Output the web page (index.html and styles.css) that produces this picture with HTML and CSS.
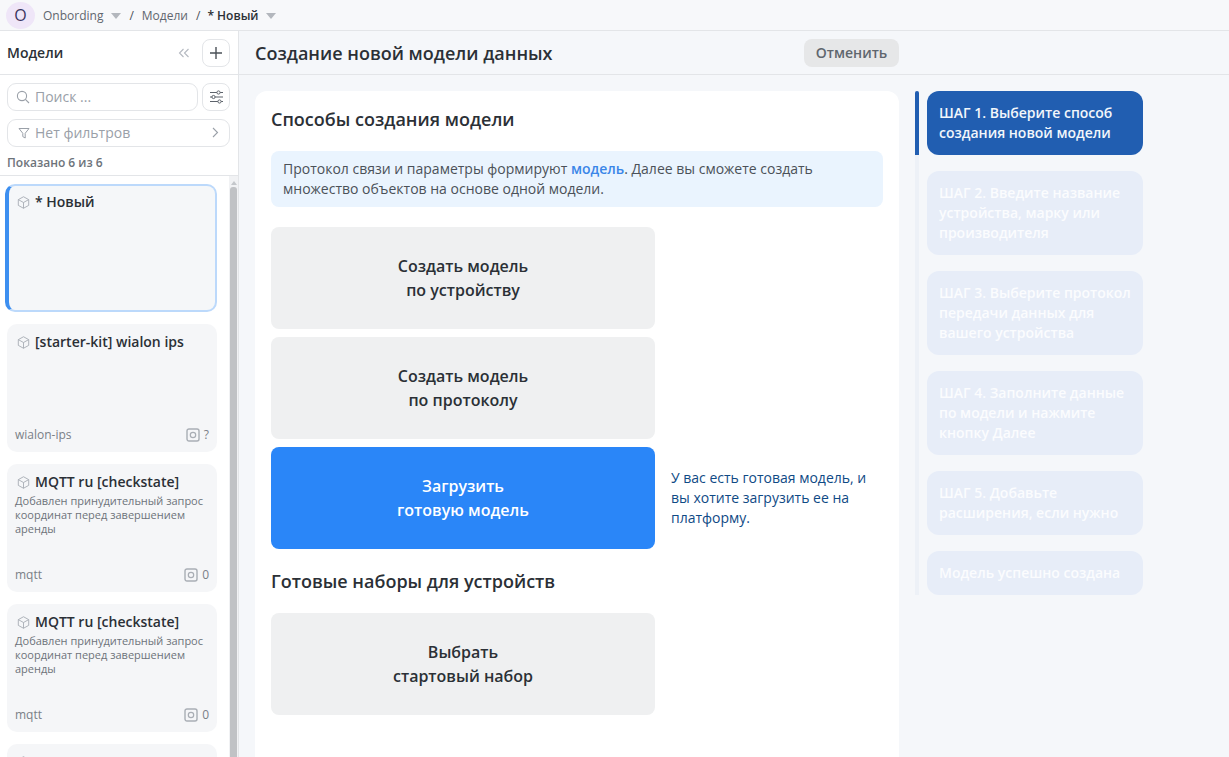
FILE: index.html
```html
<!DOCTYPE html>
<html lang="en">
<head>
    <meta charset="UTF-8">
    <title>Создание новой модели данных</title>
    <link rel="stylesheet" href="styles.css">
</head>
<body>
    <svg class="icon-defs" width="0" height="0">
        <symbol id="cube" viewBox="0 0 14 14">
            <path d="M7 .8l5.6 3.1v6.2L7 13.2l-5.6-3.1V3.9z M1.4 3.9L7 7l5.6-3.1 M7 7v6.2" fill="none" stroke="currentColor" stroke-width="1" stroke-linejoin="round"/>
        </symbol>
        <symbol id="obj" viewBox="0 0 14 14">
            <rect x="1" y="1" width="12" height="12" rx="2" fill="none" stroke="currentColor" stroke-width="1.4"/>
            <circle cx="7" cy="7" r="2.7" fill="none" stroke="currentColor" stroke-width="1.2"/>
        </symbol>
    </svg>

    <header class="topbar">
        <div class="avatar">O</div>
        <span class="crumb">Onbording</span>
        <span class="caret"></span>
        <span class="sep">/</span>
        <span class="crumb">Модели</span>
        <span class="sep">/</span>
        <span class="crumb crumb-current">* Новый</span>
        <span class="caret"></span>
    </header>

    <div class="layout">
        <aside class="sidebar">
            <div class="side-head">
                <h2>Модели</h2>
                <span class="collapse">
                    <svg width="12" height="10" viewBox="0 0 12 10"><path d="M5.5 1L1.5 5l4 4M10.5 1l-4 4 4 4" fill="none" stroke="#b4b9c0" stroke-width="1.1"/></svg>
                </span>
                <button class="square-btn">
                    <svg width="14" height="14" viewBox="0 0 14 14"><path d="M7 1v12M1 7h12" fill="none" stroke="#4b5158" stroke-width="1.4"/></svg>
                </button>
            </div>
            <div class="side-tools">
                <div class="search-row">
                    <div class="field search">
                        <svg width="14" height="14" viewBox="0 0 14 14"><circle cx="6" cy="6" r="4.6" fill="none" stroke="#9aa0a8" stroke-width="1.1"/><path d="M9.4 9.4L13 13" stroke="#9aa0a8" stroke-width="1.1"/></svg>
                        <span>Поиск ...</span>
                    </div>
                    <button class="square-btn small">
                        <svg width="15" height="14" viewBox="0 0 15 14"><path d="M1 2.5h13M1 7h13M1 11.5h13" stroke="#5d636b" stroke-width="1.1"/><circle cx="9.5" cy="2.5" r="1.6" fill="#fff" stroke="#5d636b"/><circle cx="4.5" cy="7" r="1.6" fill="#fff" stroke="#5d636b"/><circle cx="10.5" cy="11.5" r="1.6" fill="#fff" stroke="#5d636b"/></svg>
                    </button>
                </div>
                <div class="field filter">
                    <svg width="12" height="12" viewBox="0 0 12 12"><path d="M1 1.5h10L7.2 6.3V11L4.8 9.6V6.3z" fill="none" stroke="#9aa0a8" stroke-width="1"/></svg>
                    <span>Нет фильтров</span>
                    <svg class="chev" width="7" height="11" viewBox="0 0 7 11"><path d="M1 1l4.5 4.5L1 10" fill="none" stroke="#9aa0a8" stroke-width="1.1"/></svg>
                </div>
                <div class="shown">Показано 6 из 6</div>
            </div>
            <div class="list-wrap">
                <div class="model-list">
                    <div class="model-card active">
                        <div class="model-title"><svg class="cube"><use href="#cube"/></svg>* Новый</div>
                    </div>
                    <div class="model-card">
                        <div class="model-title"><svg class="cube"><use href="#cube"/></svg>[starter-kit] wialon ips</div>
                        <div class="model-foot"><span>wialon-ips</span><span class="count"><svg class="obj"><use href="#obj"/></svg>?</span></div>
                    </div>
                    <div class="model-card">
                        <div class="model-title"><svg class="cube"><use href="#cube"/></svg>MQTT ru [checkstate]</div>
                        <p class="model-desc">Добавлен принудительный запрос координат перед завершением аренды</p>
                        <div class="model-foot"><span>mqtt</span><span class="count"><svg class="obj"><use href="#obj"/></svg>0</span></div>
                    </div>
                    <div class="model-card">
                        <div class="model-title"><svg class="cube"><use href="#cube"/></svg>MQTT ru [checkstate]</div>
                        <p class="model-desc">Добавлен принудительный запрос координат перед завершением аренды</p>
                        <div class="model-foot"><span>mqtt</span><span class="count"><svg class="obj"><use href="#obj"/></svg>0</span></div>
                    </div>
                    <div class="model-card">
                        <div class="model-title"><svg class="cube"><use href="#cube"/></svg></div>
                    </div>
                </div>
                <div class="scrollbar">
                    <span class="scroll-arrow"></span>
                    <div class="scroll-thumb"></div>
                </div>
            </div>
        </aside>

        <main class="content">
            <div class="content-head">
                <h1>Создание новой модели данных</h1>
                <button class="cancel">Отменить</button>
            </div>
            <div class="content-body">
                <section class="panel">
                    <h3>Способы создания модели</h3>
                    <div class="notice">Протокол связи и параметры формируют <a href="#">модель</a>. Далее вы сможете создать множество объектов на основе одной модели.</div>
                    <div class="choices">
                        <div class="choice-row"><button class="choice">Создать модель<br>по устройству</button></div>
                        <div class="choice-row"><button class="choice">Создать модель<br>по протоколу</button></div>
                        <div class="choice-row">
                            <button class="choice selected">Загрузить<br>готовую модель</button>
                            <p class="choice-hint">У вас есть готовая модель, и вы хотите загрузить ее на платформу.</p>
                        </div>
                    </div>
                    <h3 class="kits-title">Готовые наборы для устройств</h3>
                    <div class="choice-row"><button class="choice">Выбрать<br>стартовый набор</button></div>
                </section>

                <nav class="steps">
                    <div class="step current">ШАГ 1. Выберите способ создания новой модели</div>
                    <div class="step">ШАГ 2. Введите название устройства, марку или производителя</div>
                    <div class="step">ШАГ 3. Выберите протокол передачи данных для вашего устройства</div>
                    <div class="step">ШАГ 4. Заполните данные по модели и нажмите кнопку Далее</div>
                    <div class="step">ШАГ 5. Добавьте расширения, если нужно</div>
                    <div class="step">Модель успешно создана</div>
                </nav>
            </div>
        </main>
    </div>
</body>
</html>
```

FILE: styles.css
```css
* {
    margin: 0;
    padding: 0;
    box-sizing: border-box;
}

html, body {
    height: 100%;
    overflow: hidden;
}

body {
    font-family: "Open Sans", "Noto Sans", sans-serif;
    background: #f5f7fa;
    color: #2b3036;
}

button {
    font-family: inherit;
    border: none;
    cursor: pointer;
}

.icon-defs {
    position: absolute;
}

.topbar {
    height: 31px;
    display: flex;
    align-items: center;
    padding-left: 6px;
    font-size: 12px;
    color: #5f666e;
    background: #f7f8fa;
    border-bottom: 1px solid #e3e5e8;
}

.avatar {
    width: 29px;
    height: 27px;
    border-radius: 50%;
    background: #efe6f8;
    color: #3b3560;
    font-size: 16px;
    text-align: center;
    line-height: 27px;
    margin-right: 8px;
}

.crumb-current {
    color: #2b3036;
    font-weight: 600;
}

.caret {
    width: 0;
    height: 0;
    margin: 1px 0 0 8px;
    border-left: 5px solid transparent;
    border-right: 5px solid transparent;
    border-top: 6px solid #b3b7bd;
}

.sep {
    margin: 0 7px 0 8px;
    color: #4b5158;
}

.caret + .sep {
    margin: 0 8px;
}

.layout {
    display: flex;
    height: 726px;
}

.sidebar {
    width: 239px;
    flex-shrink: 0;
    display: flex;
    flex-direction: column;
    background: #fff;
    border-right: 1px solid #e3e5e8;
}

.side-head {
    height: 44px;
    display: flex;
    align-items: center;
    padding: 0 8px 0 7px;
    border-bottom: 1px solid #e3e5e8;
}

.side-head h2 {
    font-size: 14px;
    font-weight: 600;
    flex: 1;
}

.collapse {
    display: flex;
    margin-right: 12px;
}

.square-btn {
    width: 28px;
    height: 28px;
    background: #fff;
    border: 1px solid #e3e5e8;
    border-radius: 8px;
    display: flex;
    align-items: center;
    justify-content: center;
}

.side-tools {
    padding: 8px 8px 0 7px;
    border-bottom: 1px solid #e3e5e8;
    height: 101px;
}

.search-row {
    display: flex;
    gap: 4px;
    margin-bottom: 8px;
}

.field {
    height: 28px;
    border: 1px solid #e3e5e8;
    border-radius: 9px;
    display: flex;
    align-items: center;
    gap: 5px;
    padding: 0 0 1px 8px;
    font-size: 14px;
    color: #9aa0a8;
}

.search {
    flex: 1;
}

.filter {
    padding-left: 10px;
    padding-right: 10px;
    gap: 5px;
}

.chev {
    margin-left: auto;
}

.shown {
    margin-top: 7px;
    font-size: 12px;
    font-weight: 600;
    color: #6d737a;
}

.list-wrap {
    flex: 1;
    display: flex;
    overflow: hidden;
}

.model-list {
    width: 229px;
    padding: 8px 12px 0 7px;
    display: flex;
    flex-direction: column;
    gap: 12px;
    flex-shrink: 0;
}

.model-card {
    height: 128px;
    flex-shrink: 0;
    background: #f5f6f8;
    border-radius: 10px;
    padding: 8px 8px 0 8px;
    display: flex;
    flex-direction: column;
}

.model-card.active {
    margin-left: -2px;
    background: #f5f7f9;
    border: 2px solid #bcd9fb;
    border-left: 4px solid #3d8ff0;
    padding: 6px 8px 0 6px;
}

.model-title {
    font-size: 14px;
    font-weight: 600;
    line-height: 20px;
    min-height: 20px;
    display: flex;
    align-items: center;
    color: #2b3036;
}

.cube {
    width: 13px;
    height: 13px;
    color: #a9aeb5;
    margin: 0 5px 0 2px;
    flex-shrink: 0;
}

.model-desc {
    font-size: 11px;
    line-height: 14px;
    color: #6d737a;
    margin-top: 2px;
}

.model-foot {
    margin-top: auto;
    margin-bottom: 9px;
    display: flex;
    justify-content: space-between;
    align-items: center;
    font-size: 12px;
    color: #7a8087;
}

.count {
    display: flex;
    align-items: center;
    gap: 4px;
}

.obj {
    width: 14px;
    height: 14px;
    color: #a9aeb5;
}

.scrollbar {
    width: 9px;
    background: #f1f2f4;
    display: flex;
    flex-direction: column;
    align-items: center;
    padding-top: 5px;
}

.scroll-arrow {
    width: 0;
    height: 0;
    border-left: 3px solid transparent;
    border-right: 3px solid transparent;
    border-bottom: 4px solid #c4c7cb;
    margin-bottom: 2px;
}

.scroll-thumb {
    width: 7px;
    flex: 1;
    background: #c0c2c5;
    border-radius: 3px 3px 0 0;
}

.content {
    flex: 1;
    display: flex;
    flex-direction: column;
    min-width: 0;
}

.content-head {
    height: 44px;
    display: flex;
    align-items: center;
    padding-left: 16px;
    border-bottom: 1px solid #e3e5e8;
}

.content-head h1 {
    font-size: 18px;
    font-weight: 600;
    line-height: 24px;
    width: 549px;
}

.cancel {
    width: 95px;
    height: 28px;
    border-radius: 8px;
    background: #e6e7e8;
    color: #5f666e;
    font-size: 14px;
    font-weight: 600;
}

.content-body {
    flex: 1;
    display: flex;
    padding: 16px 0 0 16px;
    gap: 16px;
    overflow: hidden;
}

.panel {
    width: 644px;
    background: #fff;
    border-radius: 12px 12px 0 0;
    padding: 16px;
}

.panel h3 {
    font-size: 18px;
    font-weight: 600;
    line-height: 24px;
}

.notice {
    margin-top: 20px;
    padding: 8px 12px;
    background: #eaf4fe;
    border-radius: 8px;
    font-size: 14px;
    line-height: 20px;
    color: #4b5158;
}

.notice a {
    color: #3a86e8;
    font-weight: 600;
    text-decoration: none;
}

.choices {
    margin-top: 20px;
    display: flex;
    flex-direction: column;
    gap: 8px;
}

.choice-row {
    display: flex;
    align-items: center;
    gap: 16px;
}

.choice {
    width: 384px;
    height: 102px;
    flex-shrink: 0;
    background: #eff0f1;
    border-radius: 8px;
    font-size: 16px;
    font-weight: 600;
    line-height: 24px;
    color: #2b3036;
}

.choice.selected {
    background: #2a86f8;
    color: #fff;
}

.choice-hint {
    font-size: 14px;
    line-height: 20px;
    color: #0f4a85;
}

.kits-title {
    margin: 20px 0;
}

.steps {
    width: 228px;
    height: 504px;
    display: flex;
    flex-direction: column;
    gap: 16px;
    padding-left: 8px;
    border-left: 4px solid #edf1f7;
    position: relative;
}

/* marker over the rail next to the current step */
.steps::before {
    content: "";
    position: absolute;
    left: -4px;
    top: 0;
    width: 4px;
    height: 64px;
    background: #215eb1;
    border-radius: 2px 2px 0 0;
}

.step {
    padding: 12px 4px 12px 12px;
    background: #e7edf8;
    border-radius: 12px;
    font-size: 14px;
    font-weight: 600;
    line-height: 20px;
    color: #fbfcfe;
}

.step.current {
    background: #215eb1;
    color: #f2f6fb;
}
```
